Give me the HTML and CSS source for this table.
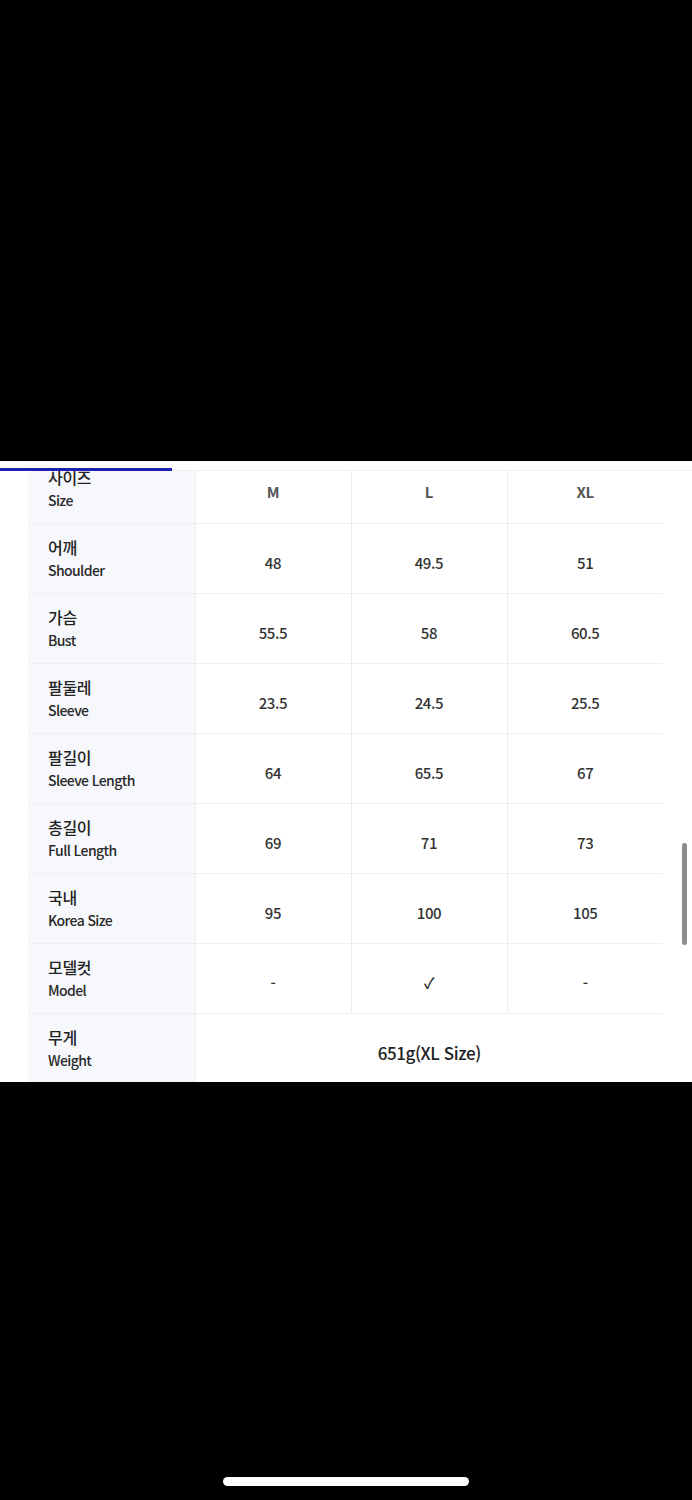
FILE: index.html
```html
<!DOCTYPE html>
<html lang="ko">
<head>
<meta charset="utf-8">
<link rel="stylesheet" href="styles.css">
</head>
<body>
<div class="screen">
  <div class="panel">
    <div class="topbar"><div class="progress"></div></div>
    <div class="viewport">
      <table class="size-table">
        <colgroup>
          <col class="c-label"><col class="c-val"><col class="c-val"><col class="c-val">
        </colgroup>
        <tbody>
          <tr>
            <th><span class="ko">사이즈</span><span class="en">Size</span></th>
            <td class="head">M</td><td class="head">L</td><td class="head">XL</td>
          </tr>
          <tr>
            <th><span class="ko">어깨</span><span class="en">Shoulder</span></th>
            <td>48</td><td>49.5</td><td>51</td>
          </tr>
          <tr>
            <th><span class="ko">가슴</span><span class="en">Bust</span></th>
            <td>55.5</td><td>58</td><td>60.5</td>
          </tr>
          <tr>
            <th><span class="ko">팔둘레</span><span class="en">Sleeve</span></th>
            <td>23.5</td><td>24.5</td><td>25.5</td>
          </tr>
          <tr>
            <th><span class="ko">팔길이</span><span class="en">Sleeve Length</span></th>
            <td>64</td><td>65.5</td><td>67</td>
          </tr>
          <tr>
            <th><span class="ko">총길이</span><span class="en">Full Length</span></th>
            <td>69</td><td>71</td><td>73</td>
          </tr>
          <tr>
            <th><span class="ko">국내</span><span class="en">Korea Size</span></th>
            <td>95</td><td>100</td><td>105</td>
          </tr>
          <tr>
            <th><span class="ko">모델컷</span><span class="en">Model</span></th>
            <td>-</td><td class="check">✓</td><td>-</td>
          </tr>
          <tr>
            <th><span class="ko">무게</span><span class="en">Weight</span></th>
            <td colspan="3" class="weight">651g(XL Size)</td>
          </tr>
        </tbody>
      </table>
    </div>
    <div class="scrollbar"></div>
  </div>
  <div class="home-indicator"></div>
</div>
</body>
</html>
```
FILE: styles.css
```css
* { box-sizing: border-box; }
html, body {
  margin: 0;
  padding: 0;
  background: #000;
}
.screen {
  width: 692px;
  height: 1500px;
  background: #000;
  padding-top: 461px;
  font-family: "Noto Sans CJK KR", "Noto Sans", sans-serif;
  color: #222;
}
.panel {
  position: relative;
  height: 621px;
  background: #fff;
  overflow: hidden;
}
.topbar {
  height: 10px;
  border-bottom: 1px solid #eef0f3;
  position: relative;
}
.progress {
  position: absolute;
  left: 0;
  bottom: -1px;
  width: 172px;
  height: 3px;
  background: #1d1fb5;
}
.viewport {
  height: 611px;
  overflow: hidden;
}
.size-table {
  margin: -18px 0 0 28px;
  width: 635px;
  border-collapse: collapse;
  table-layout: fixed;
}
.c-label { width: 167px; }
.c-val { width: 156px; }
.size-table tr { height: 70px; }
.size-table th {
  background: #f6f8fc;
  text-align: left;
  padding: 0 0 0 20px;
  font-weight: normal;
  border-bottom: 1px solid #eceef1;
  border-right: 1px solid #eceef1;
  vertical-align: middle;
}
.size-table tr:last-child th,
.size-table tr:last-child td { border-bottom: none; }
.ko {
  display: block;
  font-size: 16px;
  line-height: 22px;
  font-weight: 500;
  color: #222;
  letter-spacing: -0.3px;
}
.en {
  display: block;
  font-size: 14px;
  line-height: 20px;
  margin-top: 2px;
  font-weight: 500;
  color: #2a2a2a;
  letter-spacing: -0.6px;
}
.size-table td {
  text-align: center;
  font-size: 15px;
  color: #333;
  padding: 8px 0 0;
  border-bottom: 1px solid #eceef1;
  border-right: 1px solid #eceef1;
  letter-spacing: -0.4px;
  font-weight: 500;
}
.size-table td:last-child { border-right: none; }
.size-table td.head {
  font-weight: 700;
  color: #555;
  font-size: 15px;
}
.size-table td.check { font-size: 15px; color: #222; }
.size-table td.weight {
  font-size: 17px;
  color: #222;
  border-right: none;
}
.scrollbar {
  position: absolute;
  right: 5px;
  top: 382px;
  width: 5px;
  height: 102px;
  border-radius: 3px;
  background: #8c8c8c;
}
.home-indicator {
  width: 246px;
  height: 9px;
  margin: 395px 0 0 223px;
  border-radius: 5px;
  background: #fff;
}
```
